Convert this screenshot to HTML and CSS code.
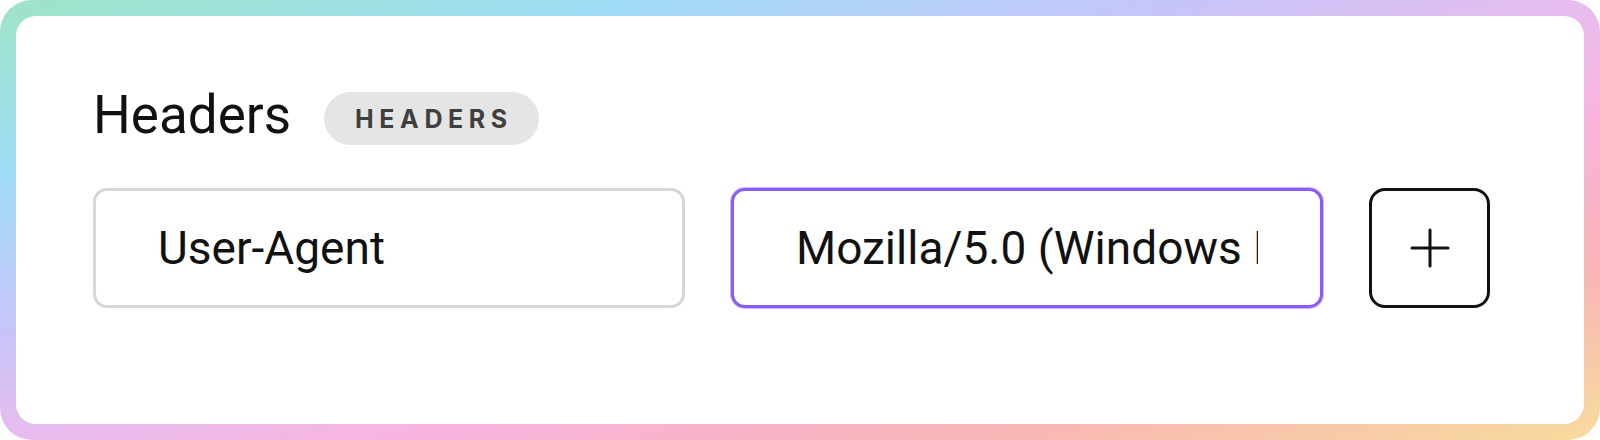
FILE: index.html
```html
<!DOCTYPE html>
<html lang="en">
<head>
<meta charset="UTF-8">
<meta name="viewport" content="width=device-width, initial-scale=1.0">
<title>Headers</title>
<link rel="stylesheet" href="styles.css">
</head>
<body>

<div class="frame">
  <div class="card">
    <div class="heading">
      <h2>Headers</h2>
      <span class="badge">HEADERS</span>
    </div>

    <div class="row">
      <input type="text" class="field" value="User-Agent">
      <input type="text" class="field active" value="Mozilla/5.0 (Windows NT 10.0; Win64; x64)">
      <button class="add" aria-label="Add header">
        <svg width="40" height="40" viewBox="0 0 40 40">
          <path d="M20 2v36M2 20h36" stroke="#111" stroke-width="3" stroke-linecap="round" fill="none"/>
        </svg>
      </button>
    </div>
  </div>
</div>

</body>
</html>
```

FILE: styles.css
```css
body {
  margin: 0;
  background: #fff;
  font-family: Roboto, "Liberation Sans", sans-serif;
  color: #111;
}
.frame {
  width: 1600px;
  height: 440px;
  box-sizing: border-box;
  padding: 16px;
  border-radius: 32px;
  background: linear-gradient(to bottom right, #9fe3c6 0%, #a0dcf6 20%, #c8c4f8 38%, #e6bcee 50%, #f8b4e0 62%, #f8b4b6 80%, #f8dc9c 100%);
}
.card {
  height: 100%;
  box-sizing: border-box;
  background: #fff;
  border-radius: 20px;
  padding: 69px 0 0 77px;
}
.heading {
  display: flex;
  align-items: center;
  gap: 33px;
}
h2 {
  margin: 0;
  font-size: 53px;
  font-weight: 400;
  line-height: 61px;
}
.badge {
  margin-top: 6px;
  height: 53px;
  box-sizing: border-box;
  padding: 0 26px 0 31px;
  display: flex;
  align-items: center;
  border-radius: 27px;
  background: #e5e5e5;
  color: #3f3f3f;
  font-family: Inter, "Liberation Sans", sans-serif;
  font-weight: 700;
  font-size: 25px;
  letter-spacing: 5.6px;
}
.row {
  display: flex;
  gap: 46px;
  margin-top: 42px;
}
.field {
  width: 592px;
  height: 120px;
  box-sizing: border-box;
  padding: 0 62px;
  border: 3px solid #d6d6d6;
  border-radius: 14px;
  font-family: Roboto, "Liberation Sans", sans-serif;
  font-size: 46px;
  color: #111;
  outline: none;
  background: #fff;
}
.field.active {
  border-color: #8a5cf6;
  box-shadow: 0 0 0 1px rgba(138, 92, 246, 0.45);
}
.add {
  width: 121px;
  height: 120px;
  box-sizing: border-box;
  border: 3px solid #111;
  border-radius: 16px;
  background: #fff;
  display: flex;
  align-items: center;
  justify-content: center;
  padding: 0;
  cursor: pointer;
}
```
